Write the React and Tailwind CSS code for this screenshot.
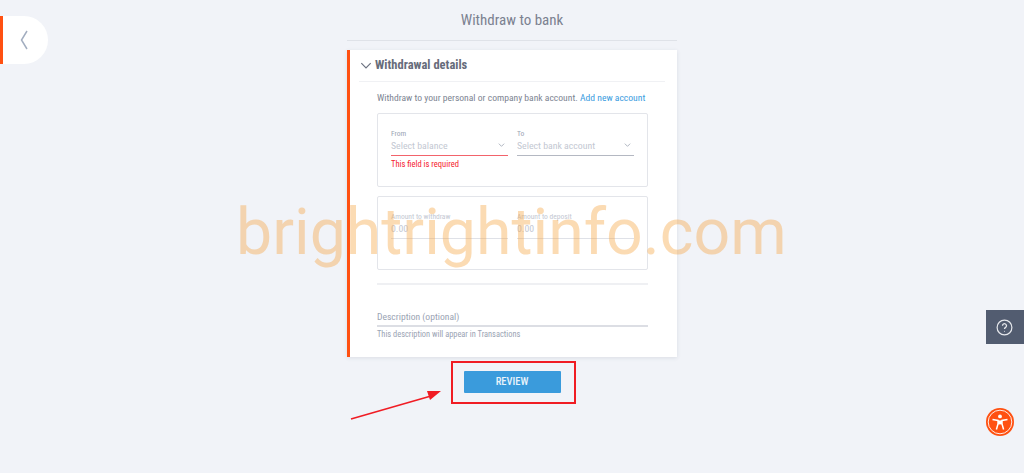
import React from 'react';

const Chevron = ({ className }) => (
  <svg className={className} viewBox="0 0 10 6" fill="none" stroke="currentColor" strokeWidth="1">
    <path d="M1 1 L5 5 L9 1" />
  </svg>
);

const Field = ({ label, value, arrow, error, lineClass, muted }) => (
  <div className="w-[117px] shrink-0">
    <div className={`text-[7.5px] leading-[11px] whitespace-nowrap ${muted ? 'text-[#c3c8d2]' : 'text-[#9aa3b3]'}`}>{label}</div>
    <div className={`flex h-[17px] items-center justify-between border-b pr-[3px] pb-[2px] ${lineClass}`}>
      <span className="whitespace-nowrap text-[9.8px] leading-[14px] text-[#c3c8d2]">{value}</span>
      {arrow && <Chevron className="mb-[3px] h-[4px] w-[7px] text-[#8a93a3]" />}
    </div>
    {error && <div className="mt-[3px] whitespace-nowrap text-[8.5px] leading-[11px] text-[#f5222d]">{error}</div>}
  </div>
);

const App = () => {
  return (
    <div className="relative h-[473px] w-[1024px] overflow-hidden bg-[#f1f3f8] font-['Roboto',sans-serif] font-stretch-condensed">
      {/* back tab */}
      <div className="absolute left-0 top-[16px] flex h-[48px] w-[48px] items-center rounded-r-[24px] border-l-[3px] border-[#ff5011] bg-white pl-[17px]">
        <svg width="8" height="20" viewBox="0 0 8 20" fill="none" stroke="#a3aec0" strokeWidth="1.5">
          <path d="M7 1 L1.5 10 L7 19" />
        </svg>
      </div>

      {/* main column */}
      <div className="mx-auto flex w-[330px] flex-col items-center">
        <div className="flex h-[41px] w-full items-center justify-center border-b border-[#dfe2e8] pt-[1px] text-[15px] text-[#7b8190]">
          Withdraw to bank
        </div>

        <div className="mt-[9px] h-[307px] w-full border-l-[3px] border-[#ff5011] bg-white pl-[9px] pr-[12px] shadow-[0_1px_4px_rgba(60,70,90,0.12)]">
          <div className="flex h-[32px] items-center border-b border-[#f0f1f4]">
            <Chevron className="ml-[1px] h-[7px] w-[12px] text-[#6c7280]" />
            <span className="ml-[3px] text-[12.5px] font-bold text-[#666c7a]">Withdrawal details</span>
          </div>

          <div className="pl-[18px]">
            <div className="mt-[9px] whitespace-nowrap text-[9.6px] leading-[14px] text-[#7d8492]">
              Withdraw to your personal or company bank account. <span className="text-[#3a9ce0]">Add new account</span>
            </div>

            <div className="mt-[8px] flex h-[74px] w-[271px] gap-[9px] rounded-[2px] border border-[#e3e5ea] pl-[13px] pt-[14px]">
              <Field label="From" value="Select balance" arrow error="This field is required" lineClass="border-[#f2636b]" />
              <Field label="To" value="Select bank account" arrow lineClass="border-[#b4b8c2]" />
            </div>

            <div className="mt-[9px] flex h-[74px] w-[271px] gap-[9px] rounded-[2px] border border-[#e3e5ea] pl-[13px] pt-[14px]">
              <Field label="Amount to withdraw" value="0.00" muted lineClass="border-[#dfe1e7]" />
              <Field label="Amount to deposit" value="0.00" muted lineClass="border-[#dfe1e7]" />
            </div>

            <div className="mt-[13px] h-[2px] w-[271px] bg-[#eff0f3]" />

            <div className="mt-[26px] flex h-[16px] w-[271px] items-center border-b-2 border-[#dcdee4] pb-[1px] text-[9.6px] text-[#9aa3b3]">
              Description (optional)
            </div>
            <div className="mt-[1px] text-[8.4px] leading-[12px] text-[#9aa3b3]">
              This description will appear in Transactions
            </div>
          </div>
        </div>

        <button className="mt-[14px] flex h-[22px] w-[97px] items-center justify-center rounded-[1px] bg-[#3a9bdc] text-[10.5px] font-medium text-[#e8f3fb]">
          REVIEW
        </button>
      </div>

      {/* help tab */}
      <div className="absolute right-0 top-[310px] flex h-[34px] w-[38px] items-center justify-center bg-[#525c70] pr-[2px]">
        <svg width="17" height="17" viewBox="0 0 17 17" fill="none" stroke="#e6e8ec" strokeWidth="1.2">
          <circle cx="8.5" cy="8.5" r="7.4" />
          <path d="M6.5 6.8a2 2 0 1 1 3.1 1.6c-.7.5-1.1.9-1.1 1.7" strokeWidth="1.3" />
          <circle cx="8.5" cy="12.2" r="0.5" fill="#e6e8ec" stroke="none" />
        </svg>
      </div>

      {/* accessibility button */}
      <div className="absolute left-[986px] top-[408px] h-[28px] w-[28px]">
        <svg width="28" height="28" viewBox="0 0 28 28">
          <circle cx="14" cy="14" r="14" fill="#ff5011" />
          <circle cx="14" cy="14" r="11.8" fill="none" stroke="#fff" strokeWidth="0.9" />
          <circle cx="14" cy="8.4" r="1.9" fill="#fff" />
          <path d="M6.5 11.4 L12 12.4 V16 L10.4 21.5 M21.5 11.4 L16 12.4 V16 L17.6 21.5" stroke="#fff" strokeWidth="1.5" fill="none" />
          <path d="M12 12.4 H16 V16.4 H12 Z" fill="#fff" />
        </svg>
      </div>

      {/* annotation overlay */}
      <div className="pointer-events-none absolute left-[451px] top-[361px] h-[43px] w-[125px] border-2 border-[#f01c24]" />
      <svg className="pointer-events-none absolute left-[345px] top-[385px]" width="100" height="40" viewBox="0 0 100 40">
        <path d="M6 34 L86 11" stroke="#f01c24" strokeWidth="1.6" />
        <path d="M96 6 L82 6 L85 15 Z" fill="#f01c24" />
      </svg>

      {/* watermark */}
      <div className="pointer-events-none absolute left-[236px] top-[192px] whitespace-nowrap font-['Roboto',sans-serif] text-[64.4px] leading-[80px] font-stretch-normal text-[#f7a13b] opacity-[0.38]">
        brightrightinfo.com
      </div>
    </div>
  );
};

export default App;
